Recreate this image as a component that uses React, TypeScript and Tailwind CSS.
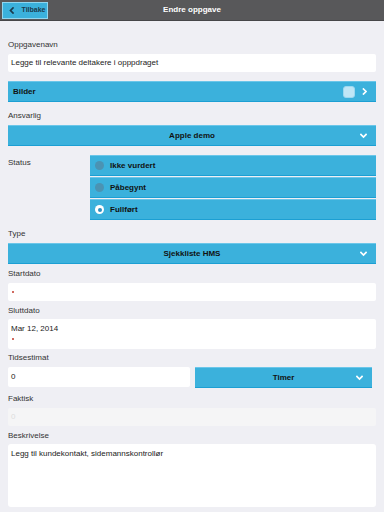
import React from 'react';

const font = { fontFamily: '"Liberation Sans", Arial, sans-serif' };

const Chevron = ({ dir = 'down' }: { dir?: 'down' | 'right' | 'left' }) => {
  const d =
    dir === 'down' ? 'M1 1.5 L3.5 4 L6 1.5' : dir === 'right' ? 'M1.5 1 L4 3.5 L1.5 6' : 'M4 1 L1.5 3.5 L4 6';
  const w = dir === 'down' ? 7 : 5.5;
  const h = dir === 'down' ? 5.5 : 7;
  return (
    <svg width={w} height={h} viewBox={`0 0 ${w} ${h}`} className="shrink-0">
      <path d={d} fill="none" stroke="currentColor" strokeWidth="1.7" strokeLinecap="square" />
    </svg>
  );
};

const Label = ({ text, className = '' }: { text: string; className?: string }) => (
  <div className={`text-[8px] leading-[10px] text-[#333] px-2 ${className}`}>{text}</div>
);

const BlueSelect = ({ text, className = '' }: { text: string; className?: string }) => (
  <div
    className={`relative flex items-center justify-center h-[21px] bg-[#3bb1dc] border-t border-t-[#6bc6e9] border-b border-b-[#1c9fd3] ${className}`}
  >
    <span className="text-[8px] font-bold text-[#111]">{text}</span>
    <span className="absolute right-[9px] top-[7px] text-white">
      <Chevron />
    </span>
  </div>
);

const Radio = ({ text, active }: { text: string; active?: boolean }) => (
  <div className="flex items-center h-[21px] bg-[#3bb1dc] border-t border-t-[#6bc6e9] border-b border-b-[#1c9fd3] pl-[5px]">
    {active ? (
      <span className="w-[9px] h-[9px] rounded-full bg-white flex items-center justify-center">
        <span className="w-[4px] h-[4px] rounded-full bg-[#2f8fc0]" />
      </span>
    ) : (
      <span className="w-[9px] h-[9px] rounded-full bg-[#4b93b3]" />
    )}
    <span className="ml-[6px] text-[8px] font-bold text-[#111]">{text}</span>
  </div>
);

export default function App() {
  return (
    <div style={font} className="w-[384px] h-[512px] bg-[#efeff4] overflow-hidden">
      <div className="relative h-[21px] bg-[#58585a] border-b border-b-[#464648] flex items-center justify-center">
        <div className="absolute left-[2px] top-[2px] w-[46px] h-[17px] bg-[#3bb1dc] border border-[#8fd6f0] flex items-center pl-[6px] gap-[7px] text-[#1b3b4d]">
          <Chevron dir="left" />
          <span className="text-[7px] font-bold">Tilbake</span>
        </div>
        <span className="text-[8px] font-bold text-white">Endre oppgave</span>
      </div>

      <Label text="Oppgavenavn" className="mt-[19px]" />
      <div className="mx-2 mt-[4px] h-[18px] bg-white rounded-[2px] flex items-center pl-[3px] text-[8px] text-[#222]">
        Legge til relevante deltakere i opppdraget
      </div>

      <div className="mx-2 mt-[9px] h-[21px] bg-[#3bb1dc] border-t border-t-[#6bc6e9] border-b border-b-[#1c9fd3] flex items-center pl-[5px] pr-[9px]">
        <span className="text-[8px] font-bold text-[#111] flex-1">Bilder</span>
        <span className="w-[12px] h-[12px] rounded-[3px] bg-[#bfe6f6] border border-[#9dd8f0]" />
        <span className="ml-[7px] text-white">
          <Chevron dir="right" />
        </span>
      </div>

      <Label text="Ansvarlig" className="mt-[9px]" />
      <BlueSelect text="Apple demo" className="mx-2 mt-[4px]" />

      <div className="flex mt-[9px] pr-2">
        <div className="w-[90px] pt-[3px]">
          <Label text="Status" />
        </div>
        <div className="flex-1 flex flex-col gap-[1px]">
          <Radio text="Ikke vurdert" />
          <Radio text="Påbegynt" />
          <Radio text="Fullført" active />
        </div>
      </div>

      <Label text="Type" className="mt-[9px]" />
      <BlueSelect text="Sjekkliste HMS" className="mx-2 mt-[4px]" />

      <Label text="Startdato" className="mt-[5px]" />
      <div className="mx-2 mt-[4px] h-[18px] bg-white rounded-[2px] flex items-center pl-[4px]">
        <span className="w-[2px] h-[2px] bg-[#c0392b] rounded-full" />
      </div>

      <Label text="Sluttdato" className="mt-[5px]" />
      <div className="mx-2 mt-[3px] h-[30px] bg-white rounded-[2px] flex flex-col pl-[3px] pt-[5px]">
        <span className="text-[8px] leading-[10px] text-[#222]">Mar 12, 2014</span>
        <span className="mt-[4px] ml-[1px] w-[2px] h-[2px] bg-[#c0392b] rounded-full" />
      </div>

      <Label text="Tidsestimat" className="mt-[4px]" />
      <div className="flex mx-2 mt-[4px] gap-[5px]">
        <div className="w-[182px] h-[20px] bg-white rounded-[2px] flex items-center pl-[3px] text-[8px] text-[#222]">
          0
        </div>
        <BlueSelect text="Timer" className="w-[177px]" />
      </div>

      <Label text="Faktisk" className="mt-[6px]" />
      <div className="mx-2 mt-[4px] h-[18px] bg-[#f5f5f6] rounded-[2px] flex items-center pl-[3px] text-[8px] text-[#ddd]">
        0
      </div>

      <Label text="Beskrivelse" className="mt-[5px]" />
      <div className="mx-2 mt-[3px] h-[63px] bg-white rounded-[3px] pl-[3px] pt-[5px] text-[8px] leading-[10px] text-[#222]">
        Legg til kundekontakt, sidemannskontrollør
      </div>
    </div>
  );
}
